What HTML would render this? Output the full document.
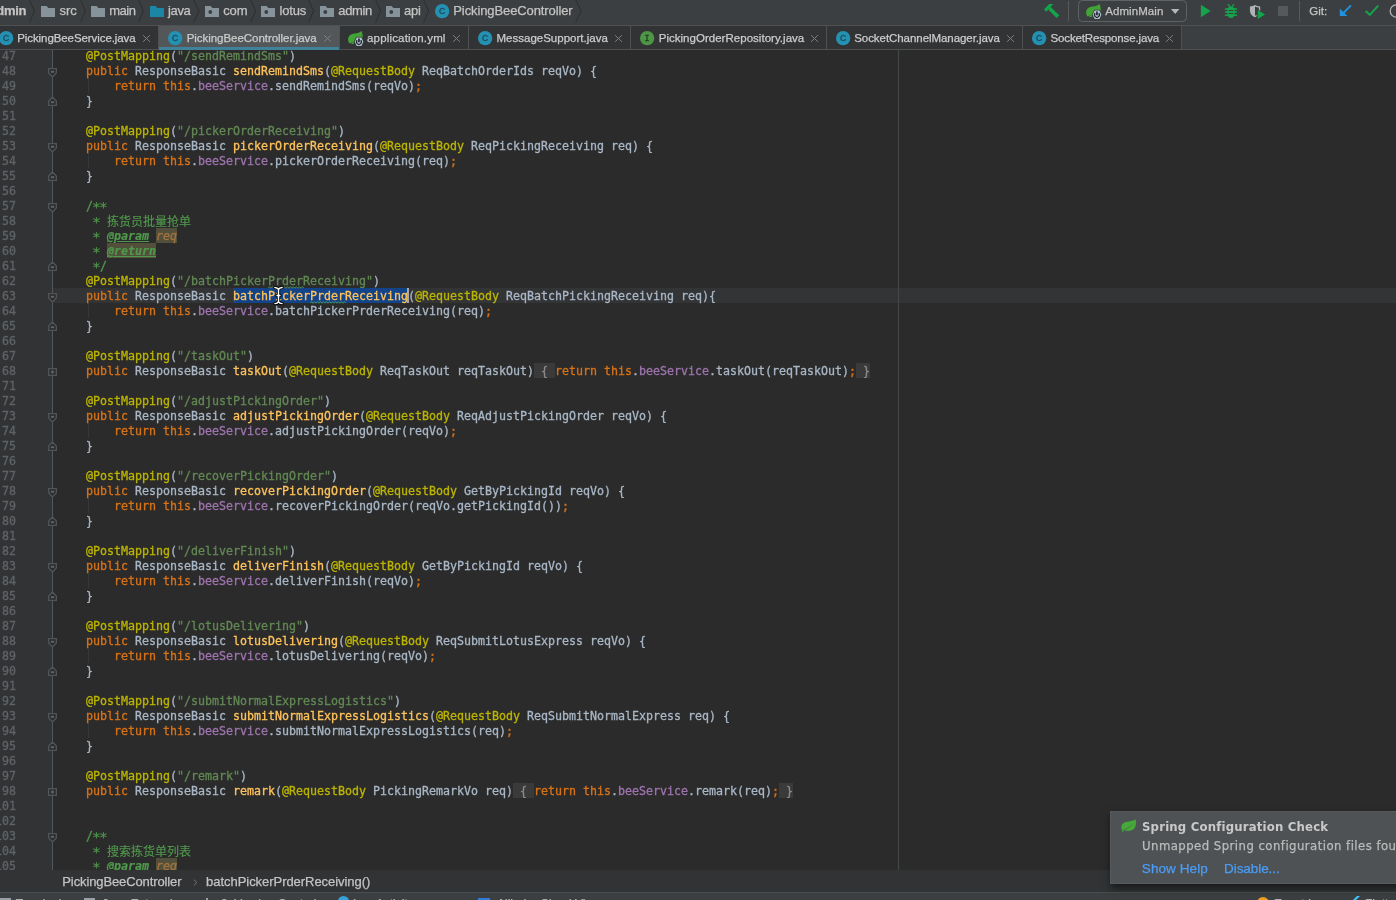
<!DOCTYPE html>
<html lang="zh">
<head>
<meta charset="utf-8">
<title>PickingBeeController.java</title>
<style>
*{box-sizing:border-box;margin:0;padding:0}
html,body{width:1396px;height:900px;overflow:hidden;background:#2b2b2b}
body{position:relative;will-change:transform;font-family:"Liberation Sans","Noto Sans CJK SC",sans-serif;color:#bbbbbb;font-size:13px}
.abs{position:absolute}
/* ---------- shared ---------- */
.tx{position:absolute;white-space:nowrap;-webkit-text-stroke:0.25px}
.ic{position:absolute;overflow:visible}
/* ---------- nav bar ---------- */
#nav{position:absolute;left:0;top:0;width:1396px;height:25px;background:#3c3f41;overflow:hidden}
#navline{position:absolute;left:0;top:25px;width:1396px;height:1px;background:#4e5052}
.vs{position:absolute;top:1px;width:1px;height:20px;background:#57595b}
.rc{position:absolute;left:1078px;top:0px;width:109px;height:22px;border:1px solid #5f6264;border-radius:4.5px}
/* ---------- tabs ---------- */
#tabs{position:absolute;left:0;top:26px;width:1396px;height:24px;background:#3c3f41;overflow:hidden}
#tabline{position:absolute;left:0;top:23px;width:1396px;height:1px;background:#4e5052}
.tab{position:absolute;top:0;height:23px;background:#313335;box-shadow:1px 0 0 #4e5052}
.tab.act{background:#53575a;height:24px;border-bottom:3px solid #3f8299}
/* ---------- editor ---------- */
#ed{will-change:transform;position:absolute;left:0;top:50px;width:1396px;height:820px;background:#2b2b2b;overflow:hidden}
#edin{position:absolute;left:0;top:-50px;width:1396px;height:900px}
#gut{position:absolute;left:0;top:0;width:52px;height:900px;background:#313335}
#gutline{position:absolute;left:52px;top:0;width:1px;height:900px;background:#54585a}
#margin{position:absolute;left:898px;top:0;width:1px;height:900px;background:#454848}
.no{position:absolute;left:-14px;width:30px;height:15px;line-height:17px;font-family:"DejaVu Sans Mono","Liberation Mono",monospace;font-size:11.63px;color:#606366;white-space:pre;text-align:right;-webkit-text-stroke:0.3px}
.fm{position:absolute}
.ln{position:absolute;left:58px;height:15px;line-height:17px;font-family:"DejaVu Sans Mono","Liberation Mono","Noto Sans CJK SC",monospace;font-size:11.63px;color:#a9b7c6;white-space:pre;-webkit-text-stroke:0.3px}
.ln.cur::before{content:"";position:absolute;left:-5px;top:0;width:1343px;height:15px;background:#333436;z-index:-1}
.ig{position:absolute;width:1px;background:#35383b}
.k{color:#d97317}.a{color:#bcb500}.s{color:#628854}.m{color:#ffc35b}.f{color:#9e74ae}
.d,.c{color:#50994c}
.c{font-size:12px;letter-spacing:0;-webkit-text-stroke:0.15px;position:relative;top:1.2px}
.ln .t,.ln .T{color:#50994c;font-weight:bold;font-style:italic;text-decoration:underline;-webkit-text-stroke:0.2px}
.bgx,.ln .T,.p,.S,.F{display:inline-block;height:15px;line-height:17px;vertical-align:top}
.ln .T{background:#52503a}
.x{display:inline-block;width:7px;height:15px;vertical-align:top;text-align:center;font-size:14.6px;line-height:15px;text-indent:-0.9px;position:relative;top:1.4px;-webkit-text-stroke:0.1px}
.p{color:#a27440;font-style:italic;background:#52503a}
.S{background:#134388}
.F{background:#3a3a3a;color:#8c8c8c}
.C{display:inline-block;width:0;height:15px;vertical-align:top;position:relative}
.C::after{content:"";position:absolute;left:-1px;top:0;width:2px;height:15px;background:#a8a8a8}
/* ---------- breadcrumbs ---------- */
#bc{position:absolute;left:0;top:870px;width:1396px;height:22px;background:#313335}
#bcline{position:absolute;left:0;top:892px;width:1396px;height:1px;background:#4b4d4f}
/* ---------- bottom tool strip ---------- */
#bot{position:absolute;left:0;top:893px;width:1396px;height:7px;background:#3c3f41;overflow:hidden}
/* ---------- notification ---------- */
#note{position:absolute;left:1110px;top:811px;width:300px;height:73px;background:#4e5254;border:1px solid #565a5c;box-shadow:1px 4px 8px rgba(0,0,0,.55)}
#notec{position:absolute;left:0;top:0;width:1396px;height:900px;overflow:hidden;pointer-events:none}
</style>
</head>
<body>
<div id="ed"><div id="edin" style="z-index:0">
<div id="gut"></div>
<div id="gutline"></div>
<div id="margin"></div>
<div class="ig" style="left:88px;top:78px;height:15px"></div>
<div class="ig" style="left:88px;top:153px;height:15px"></div>
<div class="ig" style="left:88px;top:303px;height:15px"></div>
<div class="ig" style="left:88px;top:423px;height:15px"></div>
<div class="ig" style="left:88px;top:498px;height:15px"></div>
<div class="ig" style="left:88px;top:573px;height:15px"></div>
<div class="ig" style="left:88px;top:648px;height:15px"></div>
<div class="ig" style="left:88px;top:723px;height:15px"></div>
<div class="ln" style="top:48px">    <span class="a">@PostMapping</span>(<span class="s">"/sendRemindSms"</span>)</div>
<div class="ln" style="top:63px">    <span class="k">public</span> ResponseBasic <span class="m">sendRemindSms</span>(<span class="a">@RequestBody</span> ReqBatchOrderIds reqVo) {</div>
<div class="ln" style="top:78px">        <span class="k">return this</span>.<span class="f">beeService</span>.sendRemindSms(reqVo)<span class="k">;</span></div>
<div class="ln" style="top:93px">    }</div>
<div class="ln" style="top:108px"></div>
<div class="ln" style="top:123px">    <span class="a">@PostMapping</span>(<span class="s">"/pickerOrderReceiving"</span>)</div>
<div class="ln" style="top:138px">    <span class="k">public</span> ResponseBasic <span class="m">pickerOrderReceiving</span>(<span class="a">@RequestBody</span> ReqPickingReceiving req) {</div>
<div class="ln" style="top:153px">        <span class="k">return this</span>.<span class="f">beeService</span>.pickerOrderReceiving(req)<span class="k">;</span></div>
<div class="ln" style="top:168px">    }</div>
<div class="ln" style="top:183px"></div>
<div class="ln" style="top:198px">    <span class="d">/<span class="x">*</span><span class="x">*</span></span></div>
<div class="ln" style="top:213px">    <span class="d"> <span class="x">*</span> </span><span class="c">拣货员批量抢单</span></div>
<div class="ln" style="top:228px">    <span class="d"> <span class="x">*</span> </span><span class="t">@param</span><span class="d"> </span><span class="p">req</span></div>
<div class="ln" style="top:243px">    <span class="d"> <span class="x">*</span> </span><span class="T">@return</span></div>
<div class="ln" style="top:258px">    <span class="d"> <span class="x">*</span>/</span></div>
<div class="ln" style="top:273px">    <span class="a">@PostMapping</span>(<span class="s">"/batchPickerPrderReceiving"</span>)</div>
<div class="ln cur" style="top:288px">    <span class="k">public</span> ResponseBasic <span class="S"><span class="m">batchPickerPrderReceiving</span></span><span class="C"></span>(<span class="a">@RequestBody</span> ReqBatchPickingReceiving req){</div>
<div class="ln" style="top:303px">        <span class="k">return this</span>.<span class="f">beeService</span>.batchPickerPrderReceiving(req)<span class="k">;</span></div>
<div class="ln" style="top:318px">    }</div>
<div class="ln" style="top:333px"></div>
<div class="ln" style="top:348px">    <span class="a">@PostMapping</span>(<span class="s">"/taskOut"</span>)</div>
<div class="ln" style="top:363px">    <span class="k">public</span> ResponseBasic <span class="m">taskOut</span>(<span class="a">@RequestBody</span> ReqTaskOut reqTaskOut)<span class="F"> { </span><span class="k">return this</span>.<span class="f">beeService</span>.taskOut(reqTaskOut)<span class="k">;</span><span class="F"> }</span></div>
<div class="ln" style="top:378px"></div>
<div class="ln" style="top:393px">    <span class="a">@PostMapping</span>(<span class="s">"/adjustPickingOrder"</span>)</div>
<div class="ln" style="top:408px">    <span class="k">public</span> ResponseBasic <span class="m">adjustPickingOrder</span>(<span class="a">@RequestBody</span> ReqAdjustPickingOrder reqVo) {</div>
<div class="ln" style="top:423px">        <span class="k">return this</span>.<span class="f">beeService</span>.adjustPickingOrder(reqVo)<span class="k">;</span></div>
<div class="ln" style="top:438px">    }</div>
<div class="ln" style="top:453px"></div>
<div class="ln" style="top:468px">    <span class="a">@PostMapping</span>(<span class="s">"/recoverPickingOrder"</span>)</div>
<div class="ln" style="top:483px">    <span class="k">public</span> ResponseBasic <span class="m">recoverPickingOrder</span>(<span class="a">@RequestBody</span> GetByPickingId reqVo) {</div>
<div class="ln" style="top:498px">        <span class="k">return this</span>.<span class="f">beeService</span>.recoverPickingOrder(reqVo.getPickingId())<span class="k">;</span></div>
<div class="ln" style="top:513px">    }</div>
<div class="ln" style="top:528px"></div>
<div class="ln" style="top:543px">    <span class="a">@PostMapping</span>(<span class="s">"/deliverFinish"</span>)</div>
<div class="ln" style="top:558px">    <span class="k">public</span> ResponseBasic <span class="m">deliverFinish</span>(<span class="a">@RequestBody</span> GetByPickingId reqVo) {</div>
<div class="ln" style="top:573px">        <span class="k">return this</span>.<span class="f">beeService</span>.deliverFinish(reqVo)<span class="k">;</span></div>
<div class="ln" style="top:588px">    }</div>
<div class="ln" style="top:603px"></div>
<div class="ln" style="top:618px">    <span class="a">@PostMapping</span>(<span class="s">"/lotusDelivering"</span>)</div>
<div class="ln" style="top:633px">    <span class="k">public</span> ResponseBasic <span class="m">lotusDelivering</span>(<span class="a">@RequestBody</span> ReqSubmitLotusExpress reqVo) {</div>
<div class="ln" style="top:648px">        <span class="k">return this</span>.<span class="f">beeService</span>.lotusDelivering(reqVo)<span class="k">;</span></div>
<div class="ln" style="top:663px">    }</div>
<div class="ln" style="top:678px"></div>
<div class="ln" style="top:693px">    <span class="a">@PostMapping</span>(<span class="s">"/submitNormalExpressLogistics"</span>)</div>
<div class="ln" style="top:708px">    <span class="k">public</span> ResponseBasic <span class="m">submitNormalExpressLogistics</span>(<span class="a">@RequestBody</span> ReqSubmitNormalExpress req) {</div>
<div class="ln" style="top:723px">        <span class="k">return this</span>.<span class="f">beeService</span>.submitNormalExpressLogistics(req)<span class="k">;</span></div>
<div class="ln" style="top:738px">    }</div>
<div class="ln" style="top:753px"></div>
<div class="ln" style="top:768px">    <span class="a">@PostMapping</span>(<span class="s">"/remark"</span>)</div>
<div class="ln" style="top:783px">    <span class="k">public</span> ResponseBasic <span class="m">remark</span>(<span class="a">@RequestBody</span> PickingRemarkVo req)<span class="F"> { </span><span class="k">return this</span>.<span class="f">beeService</span>.remark(req)<span class="k">;</span><span class="F"> }</span></div>
<div class="ln" style="top:798px"></div>
<div class="ln" style="top:813px"></div>
<div class="ln" style="top:828px">    <span class="d">/<span class="x">*</span><span class="x">*</span></span></div>
<div class="ln" style="top:843px">    <span class="d"> <span class="x">*</span> </span><span class="c">搜索拣货单列表</span></div>
<div class="ln" style="top:858px">    <span class="d"> <span class="x">*</span> </span><span class="t">@param</span><span class="d"> </span><span class="p">req</span></div>
<div class="no" style="top:48px">47</div>
<div class="no" style="top:63px">48</div>
<svg class="fm" style="left:48px;top:68px" width="9" height="10" viewBox="0 0 9 10"><path d="M0.6 0.6H8.4V4.9L4.5 8.9L0.6 4.9Z" fill="#2a2b2c" stroke="#505456" stroke-width="1.5"/><rect x="2.8" y="2.8" width="3.4" height="2" fill="#5f6365"/></svg>
<div class="no" style="top:78px">49</div>
<div class="no" style="top:93px">50</div>
<svg class="fm" style="left:48px;top:96px" width="9" height="10" viewBox="0 0 9 10"><path d="M0.6 9.4H8.4V5.1L4.5 1.1L0.6 5.1Z" fill="#2a2b2c" stroke="#505456" stroke-width="1.5"/><rect x="2.8" y="5.2" width="3.4" height="2" fill="#5f6365"/></svg>
<div class="no" style="top:108px">51</div>
<div class="no" style="top:123px">52</div>
<div class="no" style="top:138px">53</div>
<svg class="fm" style="left:48px;top:143px" width="9" height="10" viewBox="0 0 9 10"><path d="M0.6 0.6H8.4V4.9L4.5 8.9L0.6 4.9Z" fill="#2a2b2c" stroke="#505456" stroke-width="1.5"/><rect x="2.8" y="2.8" width="3.4" height="2" fill="#5f6365"/></svg>
<div class="no" style="top:153px">54</div>
<div class="no" style="top:168px">55</div>
<svg class="fm" style="left:48px;top:171px" width="9" height="10" viewBox="0 0 9 10"><path d="M0.6 9.4H8.4V5.1L4.5 1.1L0.6 5.1Z" fill="#2a2b2c" stroke="#505456" stroke-width="1.5"/><rect x="2.8" y="5.2" width="3.4" height="2" fill="#5f6365"/></svg>
<div class="no" style="top:183px">56</div>
<div class="no" style="top:198px">57</div>
<svg class="fm" style="left:48px;top:203px" width="9" height="10" viewBox="0 0 9 10"><path d="M0.6 0.6H8.4V4.9L4.5 8.9L0.6 4.9Z" fill="#2a2b2c" stroke="#505456" stroke-width="1.5"/><rect x="2.8" y="2.8" width="3.4" height="2" fill="#5f6365"/></svg>
<div class="no" style="top:213px">58</div>
<div class="no" style="top:228px">59</div>
<div class="no" style="top:243px">60</div>
<div class="no" style="top:258px">61</div>
<svg class="fm" style="left:48px;top:261px" width="9" height="10" viewBox="0 0 9 10"><path d="M0.6 9.4H8.4V5.1L4.5 1.1L0.6 5.1Z" fill="#2a2b2c" stroke="#505456" stroke-width="1.5"/><rect x="2.8" y="5.2" width="3.4" height="2" fill="#5f6365"/></svg>
<div class="no" style="top:273px">62</div>
<div class="no" style="top:288px">63</div>
<svg class="fm" style="left:48px;top:293px" width="9" height="10" viewBox="0 0 9 10"><path d="M0.6 0.6H8.4V4.9L4.5 8.9L0.6 4.9Z" fill="#2a2b2c" stroke="#505456" stroke-width="1.5"/><rect x="2.8" y="2.8" width="3.4" height="2" fill="#5f6365"/></svg>
<div class="no" style="top:303px">64</div>
<div class="no" style="top:318px">65</div>
<svg class="fm" style="left:48px;top:321px" width="9" height="10" viewBox="0 0 9 10"><path d="M0.6 9.4H8.4V5.1L4.5 1.1L0.6 5.1Z" fill="#2a2b2c" stroke="#505456" stroke-width="1.5"/><rect x="2.8" y="5.2" width="3.4" height="2" fill="#5f6365"/></svg>
<div class="no" style="top:333px">66</div>
<div class="no" style="top:348px">67</div>
<div class="no" style="top:363px">68</div>
<svg class="fm" style="left:48px;top:368px" width="9" height="8" viewBox="0 0 9 8"><rect x="0.7" y="0.7" width="7.6" height="6.6" fill="#27292a" stroke="#505456" stroke-width="1.4"/><path d="M2.7 4H6.3M4.5 2.2V5.8" stroke="#5f6365" stroke-width="1.5"/></svg>
<div class="no" style="top:378px">71</div>
<div class="no" style="top:393px">72</div>
<div class="no" style="top:408px">73</div>
<svg class="fm" style="left:48px;top:413px" width="9" height="10" viewBox="0 0 9 10"><path d="M0.6 0.6H8.4V4.9L4.5 8.9L0.6 4.9Z" fill="#2a2b2c" stroke="#505456" stroke-width="1.5"/><rect x="2.8" y="2.8" width="3.4" height="2" fill="#5f6365"/></svg>
<div class="no" style="top:423px">74</div>
<div class="no" style="top:438px">75</div>
<svg class="fm" style="left:48px;top:441px" width="9" height="10" viewBox="0 0 9 10"><path d="M0.6 9.4H8.4V5.1L4.5 1.1L0.6 5.1Z" fill="#2a2b2c" stroke="#505456" stroke-width="1.5"/><rect x="2.8" y="5.2" width="3.4" height="2" fill="#5f6365"/></svg>
<div class="no" style="top:453px">76</div>
<div class="no" style="top:468px">77</div>
<div class="no" style="top:483px">78</div>
<svg class="fm" style="left:48px;top:488px" width="9" height="10" viewBox="0 0 9 10"><path d="M0.6 0.6H8.4V4.9L4.5 8.9L0.6 4.9Z" fill="#2a2b2c" stroke="#505456" stroke-width="1.5"/><rect x="2.8" y="2.8" width="3.4" height="2" fill="#5f6365"/></svg>
<div class="no" style="top:498px">79</div>
<div class="no" style="top:513px">80</div>
<svg class="fm" style="left:48px;top:516px" width="9" height="10" viewBox="0 0 9 10"><path d="M0.6 9.4H8.4V5.1L4.5 1.1L0.6 5.1Z" fill="#2a2b2c" stroke="#505456" stroke-width="1.5"/><rect x="2.8" y="5.2" width="3.4" height="2" fill="#5f6365"/></svg>
<div class="no" style="top:528px">81</div>
<div class="no" style="top:543px">82</div>
<div class="no" style="top:558px">83</div>
<svg class="fm" style="left:48px;top:563px" width="9" height="10" viewBox="0 0 9 10"><path d="M0.6 0.6H8.4V4.9L4.5 8.9L0.6 4.9Z" fill="#2a2b2c" stroke="#505456" stroke-width="1.5"/><rect x="2.8" y="2.8" width="3.4" height="2" fill="#5f6365"/></svg>
<div class="no" style="top:573px">84</div>
<div class="no" style="top:588px">85</div>
<svg class="fm" style="left:48px;top:591px" width="9" height="10" viewBox="0 0 9 10"><path d="M0.6 9.4H8.4V5.1L4.5 1.1L0.6 5.1Z" fill="#2a2b2c" stroke="#505456" stroke-width="1.5"/><rect x="2.8" y="5.2" width="3.4" height="2" fill="#5f6365"/></svg>
<div class="no" style="top:603px">86</div>
<div class="no" style="top:618px">87</div>
<div class="no" style="top:633px">88</div>
<svg class="fm" style="left:48px;top:638px" width="9" height="10" viewBox="0 0 9 10"><path d="M0.6 0.6H8.4V4.9L4.5 8.9L0.6 4.9Z" fill="#2a2b2c" stroke="#505456" stroke-width="1.5"/><rect x="2.8" y="2.8" width="3.4" height="2" fill="#5f6365"/></svg>
<div class="no" style="top:648px">89</div>
<div class="no" style="top:663px">90</div>
<svg class="fm" style="left:48px;top:666px" width="9" height="10" viewBox="0 0 9 10"><path d="M0.6 9.4H8.4V5.1L4.5 1.1L0.6 5.1Z" fill="#2a2b2c" stroke="#505456" stroke-width="1.5"/><rect x="2.8" y="5.2" width="3.4" height="2" fill="#5f6365"/></svg>
<div class="no" style="top:678px">91</div>
<div class="no" style="top:693px">92</div>
<div class="no" style="top:708px">93</div>
<svg class="fm" style="left:48px;top:713px" width="9" height="10" viewBox="0 0 9 10"><path d="M0.6 0.6H8.4V4.9L4.5 8.9L0.6 4.9Z" fill="#2a2b2c" stroke="#505456" stroke-width="1.5"/><rect x="2.8" y="2.8" width="3.4" height="2" fill="#5f6365"/></svg>
<div class="no" style="top:723px">94</div>
<div class="no" style="top:738px">95</div>
<svg class="fm" style="left:48px;top:741px" width="9" height="10" viewBox="0 0 9 10"><path d="M0.6 9.4H8.4V5.1L4.5 1.1L0.6 5.1Z" fill="#2a2b2c" stroke="#505456" stroke-width="1.5"/><rect x="2.8" y="5.2" width="3.4" height="2" fill="#5f6365"/></svg>
<div class="no" style="top:753px">96</div>
<div class="no" style="top:768px">97</div>
<div class="no" style="top:783px">98</div>
<svg class="fm" style="left:48px;top:788px" width="9" height="8" viewBox="0 0 9 8"><rect x="0.7" y="0.7" width="7.6" height="6.6" fill="#27292a" stroke="#505456" stroke-width="1.4"/><path d="M2.7 4H6.3M4.5 2.2V5.8" stroke="#5f6365" stroke-width="1.5"/></svg>
<div class="no" style="top:798px">101</div>
<div class="no" style="top:813px">102</div>
<div class="no" style="top:828px">103</div>
<svg class="fm" style="left:48px;top:833px" width="9" height="10" viewBox="0 0 9 10"><path d="M0.6 0.6H8.4V4.9L4.5 8.9L0.6 4.9Z" fill="#2a2b2c" stroke="#505456" stroke-width="1.5"/><rect x="2.8" y="2.8" width="3.4" height="2" fill="#5f6365"/></svg>
<div class="no" style="top:843px">104</div>
<div class="no" style="top:858px">105</div>
<svg class="fm" style="left:268px;top:286px" width="36" height="3" viewBox="0 0 36 3"><path d="M0 2.3L1.5 0.6L3 2.3L4.5 0.6L6 2.3L7.5 0.6L9 2.3L10.5 0.6L12 2.3L13.5 0.6L15 2.3L16.5 0.6L18 2.3L19.5 0.6L21 2.3L22.5 0.6L24 2.3L25.5 0.6L27 2.3L28.5 0.6L30 2.3L31.5 0.6L33 2.3L34.5 0.6L36 2.3" fill="none" stroke="#4fa564" stroke-width="0.9" opacity=".9"/></svg>
<svg class="fm" style="left:310px;top:301px" width="36" height="3" viewBox="0 0 36 3"><path d="M0 2.3L1.5 0.6L3 2.3L4.5 0.6L6 2.3L7.5 0.6L9 2.3L10.5 0.6L12 2.3L13.5 0.6L15 2.3L16.5 0.6L18 2.3L19.5 0.6L21 2.3L22.5 0.6L24 2.3L25.5 0.6L27 2.3L28.5 0.6L30 2.3L31.5 0.6L33 2.3L34.5 0.6L36 2.3" fill="none" stroke="#4fa564" stroke-width="0.9" opacity=".9"/></svg>
<svg class="fm" style="left:274px;top:286px;overflow:visible" width="9" height="19" viewBox="0 0 9 19"><path d="M0.9 1.4C2.7 1.4 3.9 2.1 4.5 3.5C5.1 2.1 6.3 1.4 8.1 1.4M0.9 17.6C2.7 17.6 3.9 16.9 4.5 15.5C5.1 16.9 6.3 17.6 8.1 17.6M4.5 3.3V15.7M3.1 9.4H5.9" fill="none" stroke="#050505" stroke-width="3.3" stroke-linecap="round" stroke-linejoin="round"/><path d="M0.9 1.4C2.7 1.4 3.9 2.1 4.5 3.5C5.1 2.1 6.3 1.4 8.1 1.4M0.9 17.6C2.7 17.6 3.9 16.9 4.5 15.5C5.1 16.9 6.3 17.6 8.1 17.6M4.5 3.3V15.7M3.1 9.4H5.9" fill="none" stroke="#ffffff" stroke-width="1.45" stroke-linecap="round" stroke-linejoin="round"/></svg>
</div></div>

<div id="nav">
<span class="tx" style="left:-3.70px;top:1.09px;height:20px;line-height:20px;font-size:13px;letter-spacing:-0.288px;color:#c4c4c4;font-family:'Liberation Sans',sans-serif;font-weight:bold;">dmin</span>
<svg class="ic" style="left:29.2px;top:0" width="6.4" height="23" viewBox="0 0 6.4 23"><path d="M0.5 -0.5L5.4 11L0.5 22.5" fill="none" stroke="#2b2d2e" stroke-width="1"/></svg>
<svg class="ic" style="left:41px;top:5.5px" width="14" height="11" viewBox="0 0 14 11"><path d="M0 0H5.6L7.4 2H14V11H0Z" fill="#87939a"/></svg>
<span class="tx" style="left:59.50px;top:1.09px;height:20px;line-height:20px;font-size:13px;letter-spacing:-0.010px;color:#c4c4c4;font-family:'Liberation Sans',sans-serif;">src</span>
<svg class="ic" style="left:80px;top:0" width="6.4" height="23" viewBox="0 0 6.4 23"><path d="M0.5 -0.5L5.4 11L0.5 22.5" fill="none" stroke="#2b2d2e" stroke-width="1"/></svg>
<svg class="ic" style="left:91px;top:5.5px" width="14" height="11" viewBox="0 0 14 11"><path d="M0 0H5.6L7.4 2H14V11H0Z" fill="#87939a"/></svg>
<span class="tx" style="left:109.20px;top:1.09px;height:20px;line-height:20px;font-size:13px;letter-spacing:-0.444px;color:#c4c4c4;font-family:'Liberation Sans',sans-serif;">main</span>
<svg class="ic" style="left:138.1px;top:0" width="6.4" height="23" viewBox="0 0 6.4 23"><path d="M0.5 -0.5L5.4 11L0.5 22.5" fill="none" stroke="#2b2d2e" stroke-width="1"/></svg>
<svg class="ic" style="left:150px;top:6px" width="14" height="11" viewBox="0 0 14 11"><path d="M0 0H5.6L7.4 2H14V11H0Z" fill="#1c86a6"/></svg>
<span class="tx" style="left:168.00px;top:1.09px;height:20px;line-height:20px;font-size:13px;letter-spacing:-0.362px;color:#c4c4c4;font-family:'Liberation Sans',sans-serif;">java</span>
<svg class="ic" style="left:193.2px;top:0" width="7" height="23" viewBox="0 0 7 23"><path d="M0.5 -0.5L6 11L0.5 22.5" fill="none" stroke="#2b2d2e" stroke-width="1"/></svg>
<svg class="ic" style="left:205px;top:5.5px" width="14" height="11" viewBox="0 0 14 11"><path d="M0 0H5.6L7.4 2H14V11H0Z" fill="#87939a"/><circle cx="5.3" cy="6" r="1.9" fill="#3c3f41"/></svg>
<span class="tx" style="left:223.20px;top:1.09px;height:20px;line-height:20px;font-size:13px;letter-spacing:-0.086px;color:#c4c4c4;font-family:'Liberation Sans',sans-serif;">com</span>
<svg class="ic" style="left:249.6px;top:0" width="6.6" height="23" viewBox="0 0 6.6 23"><path d="M0.5 -0.5L5.6 11L0.5 22.5" fill="none" stroke="#2b2d2e" stroke-width="1"/></svg>
<svg class="ic" style="left:261px;top:5.5px" width="14" height="11" viewBox="0 0 14 11"><path d="M0 0H5.6L7.4 2H14V11H0Z" fill="#87939a"/><circle cx="5.3" cy="6" r="1.9" fill="#3c3f41"/></svg>
<span class="tx" style="left:279.50px;top:1.09px;height:20px;line-height:20px;font-size:13px;letter-spacing:-0.192px;color:#c4c4c4;font-family:'Liberation Sans',sans-serif;">lotus</span>
<svg class="ic" style="left:307.9px;top:0" width="6.6" height="23" viewBox="0 0 6.6 23"><path d="M0.5 -0.5L5.6 11L0.5 22.5" fill="none" stroke="#2b2d2e" stroke-width="1"/></svg>
<svg class="ic" style="left:319.7px;top:5.5px" width="14" height="11" viewBox="0 0 14 11"><path d="M0 0H5.6L7.4 2H14V11H0Z" fill="#87939a"/><circle cx="5.3" cy="6" r="1.9" fill="#3c3f41"/></svg>
<span class="tx" style="left:338.30px;top:1.09px;height:20px;line-height:20px;font-size:13px;letter-spacing:-0.362px;color:#c4c4c4;font-family:'Liberation Sans',sans-serif;">admin</span>
<svg class="ic" style="left:374.5px;top:0" width="6.6" height="23" viewBox="0 0 6.6 23"><path d="M0.5 -0.5L5.6 11L0.5 22.5" fill="none" stroke="#2b2d2e" stroke-width="1"/></svg>
<svg class="ic" style="left:386px;top:5.5px" width="14" height="11" viewBox="0 0 14 11"><path d="M0 0H5.6L7.4 2H14V11H0Z" fill="#87939a"/><circle cx="5.3" cy="6" r="1.9" fill="#3c3f41"/></svg>
<span class="tx" style="left:403.90px;top:1.09px;height:20px;line-height:20px;font-size:13px;letter-spacing:-0.116px;color:#c4c4c4;font-family:'Liberation Sans',sans-serif;">api</span>
<svg class="ic" style="left:423.3px;top:0" width="6.6" height="23" viewBox="0 0 6.6 23"><path d="M0.5 -0.5L5.6 11L0.5 22.5" fill="none" stroke="#2b2d2e" stroke-width="1"/></svg>
<svg class="ic" style="left:434.75px;top:4.05px" width="14.3" height="14.3" viewBox="0 0 14.2 14.2"><circle cx="7.1" cy="7.1" r="7.1" fill="#2591b2"/><text x="7.1" y="10.15" text-anchor="middle" font-family="'Liberation Sans',sans-serif" font-size="8.6" fill="#1d4f60" stroke="#1d4f60" stroke-width="0.35">C</text></svg>
<span class="tx" style="left:453.30px;top:1.09px;height:20px;line-height:20px;font-size:13px;letter-spacing:-0.105px;color:#c4c4c4;font-family:'Liberation Sans',sans-serif;">PickingBeeController</span>
<svg class="ic" style="left:575px;top:0" width="7.2" height="23" viewBox="0 0 7.2 23"><path d="M0.5 -0.5L6.2 11L0.5 22.5" fill="none" stroke="#2b2d2e" stroke-width="1"/></svg>
<div class="vs" style="left:1068px"></div>
<div class="vs" style="left:1299px"></div>
<div class="rc"></div>
<svg class="ic" style="left:1085.8px;top:4px" width="17" height="17" viewBox="0 0 17 17"><path d="M13.3 -0.1C14.5 1.8 15.1 4.6 14.4 7.6C13.6 10.6 9.6 11.6 6 11.2C4.4 11.2 3 11.7 2 12.4L1.2 11.9C-0.6 9.6 -0.2 5.6 2.6 3.7C5.6 1.8 10 3.1 13.3 -0.1Z" fill="#43a436"/><path d="M3.6 11.6L6.4 11.2L5.6 13.1L3.4 12.9Z" fill="#43a436"/><path d="M8.3 5.7H13.8L16.3 10.75L13.8 15.8H8.3L5.7 10.75Z" fill="#3c3f41"/><path d="M8.75 6.5H13.35L15.4 10.75L13.35 15H8.75L6.6 10.75Z" fill="#b3c4d5"/><path d="M9.2 9.3A2.4 2.4 0 1 0 12.7 9.3" fill="none" stroke="#20252a" stroke-width="1.25"/><path d="M10.95 7.6V11.3" fill="none" stroke="#20252a" stroke-width="1.7"/></svg>
<span class="tx" style="left:1105.20px;top:0.81px;height:20px;line-height:20px;font-size:11.5px;letter-spacing:0.075px;color:#c4c4c4;font-family:'Liberation Sans',sans-serif;">AdminMain</span>
<span class="tx" style="left:1309.20px;top:0.81px;height:20px;line-height:20px;font-size:11.5px;letter-spacing:0.052px;color:#c4c4c4;font-family:'Liberation Sans',sans-serif;">Git:</span>
<svg class="ic" style="left:0;top:0" width="1396" height="25" viewBox="0 0 1396 25"><path d="M1043.9 9.5L1049.2 4H1053.3L1046.2 11.7Z" fill="#14a44b"/><path d="M1048 9.3L1050.5 6.8L1059.3 15.4L1056.6 18.1Z" fill="#14a44b"/><path d="M1171 8.9H1179.4L1175.2 14.1Z" fill="#b4b6b8"/><path d="M1200.9 4.8L1210.6 11L1200.9 17.2Z" fill="#14a44b"/><path d="M1228 4.2L1230.3 7.2M1234 4.2L1231.7 7.2" stroke="#14a44b" stroke-width="1.3" fill="none"/><path d="M1227.3 9.6C1227.3 5.8 1234.7 5.8 1234.7 9.6V13.4C1234.7 19.4 1227.3 19.4 1227.3 13.4Z" fill="#14a44b"/><path d="M1224.9 8.9H1237.1M1224.9 12H1237.1M1224.9 15.3H1237.1" stroke="#14a44b" stroke-width="1.5" fill="none"/><path d="M1228.6 10.45H1233.4M1228.6 13.55H1233.4" stroke="#3c3f41" stroke-width="1.1" fill="none"/><path d="M1249.9 6.4C1251.9 6.3 1253.6 5.8 1255 5C1256.4 5.8 1258.1 6.3 1260.2 6.4V10.4C1260.2 13.8 1258 16 1255 17.2C1252 16 1249.9 13.8 1249.9 10.4Z" fill="#b0b3b6"/><path d="M1255 6.5C1256 7 1257.3 7.4 1258.9 7.5V10.4C1258.9 12.9 1257.4 14.7 1255 15.8Z" fill="#3c3f41"/><path d="M1256.6 8.6L1266.6 14.5L1256.6 20.5Z" fill="#3c3f41"/><path d="M1257.8 10.1L1265 14.5L1257.8 19Z" fill="#14a44b"/><rect x="1278" y="6" width="10" height="10" fill="#56595b"/><path d="M1351 5.4L1342 14.4" stroke="#1f93de" stroke-width="1.9" fill="none"/><path d="M1339.8 8.4V16H1347.4Z" fill="#1f93de"/><path d="M1365.6 11L1369.8 14.8L1378.2 5.6" stroke="#14a44b" stroke-width="2" fill="none"/><circle cx="1396.4" cy="11" r="6.2" fill="none" stroke="#afb1b3" stroke-width="1.3"/></svg>
</div>
<div id="navline"></div>

<div id="tabs">
<div id="tabline"></div>
<div class="tab" style="left:0px;width:158px"></div>
<svg class="ic" style="left:-1.15px;top:4.85px" width="14.3" height="14.3" viewBox="0 0 14.2 14.2"><circle cx="7.1" cy="7.1" r="7.1" fill="#2591b2"/><text x="7.1" y="10.15" text-anchor="middle" font-family="'Liberation Sans',sans-serif" font-size="8.6" fill="#1d4f60" stroke="#1d4f60" stroke-width="0.35">C</text></svg>
<span class="tx" style="left:17.20px;top:2.11px;height:20px;line-height:20px;font-size:11.5px;letter-spacing:-0.081px;color:#cccccc;font-family:'Liberation Sans',sans-serif;">PickingBeeService.java</span>
<svg class="ic" style="left:142.1px;top:8.1px" width="9" height="9" viewBox="0 0 9 9"><path d="M1.1 1.2L7.9 7.8M7.9 1.2L1.1 7.8" stroke="#7d8183" stroke-width="1" fill="none"/></svg>
<div class="tab act" style="left:159px;width:180px"></div>
<svg class="ic" style="left:167.85px;top:4.85px" width="14.3" height="14.3" viewBox="0 0 14.2 14.2"><circle cx="7.1" cy="7.1" r="7.1" fill="#2591b2"/><text x="7.1" y="10.15" text-anchor="middle" font-family="'Liberation Sans',sans-serif" font-size="8.6" fill="#1d4f60" stroke="#1d4f60" stroke-width="0.35">C</text></svg>
<span class="tx" style="left:186.70px;top:2.11px;height:20px;line-height:20px;font-size:11.5px;letter-spacing:-0.042px;color:#cccccc;font-family:'Liberation Sans',sans-serif;">PickingBeeController.java</span>
<svg class="ic" style="left:323px;top:8.1px" width="9" height="9" viewBox="0 0 9 9"><path d="M1.1 1.2L7.9 7.8M7.9 1.2L1.1 7.8" stroke="#7d8183" stroke-width="1" fill="none"/></svg>
<div class="tab" style="left:340px;width:128px"></div>
<svg class="ic" style="left:347.7px;top:5px" width="17" height="17" viewBox="0 0 17 17"><path d="M13.3 -0.1C14.5 1.8 15.1 4.6 14.4 7.6C13.6 10.6 9.6 11.6 6 11.2C4.4 11.2 3 11.7 2 12.4L1.2 11.9C-0.6 9.6 -0.2 5.6 2.6 3.7C5.6 1.8 10 3.1 13.3 -0.1Z" fill="#43a436"/><path d="M3.6 11.6L6.4 11.2L5.6 13.1L3.4 12.9Z" fill="#43a436"/><path d="M8.3 5.7H13.8L16.3 10.75L13.8 15.8H8.3L5.7 10.75Z" fill="#313335"/><path d="M8.75 6.5H13.35L15.4 10.75L13.35 15H8.75L6.6 10.75Z" fill="#b3c4d5"/><path d="M9.2 9.3A2.4 2.4 0 1 0 12.7 9.3" fill="none" stroke="#20252a" stroke-width="1.25"/><path d="M10.95 7.6V11.3" fill="none" stroke="#20252a" stroke-width="1.7"/></svg>
<span class="tx" style="left:367.00px;top:2.11px;height:20px;line-height:20px;font-size:11.5px;letter-spacing:0.169px;color:#cccccc;font-family:'Liberation Sans',sans-serif;">application.yml</span>
<svg class="ic" style="left:452.3px;top:8.1px" width="9" height="9" viewBox="0 0 9 9"><path d="M1.1 1.2L7.9 7.8M7.9 1.2L1.1 7.8" stroke="#7d8183" stroke-width="1" fill="none"/></svg>
<div class="tab" style="left:469px;width:161px"></div>
<svg class="ic" style="left:477.75px;top:4.85px" width="14.3" height="14.3" viewBox="0 0 14.2 14.2"><circle cx="7.1" cy="7.1" r="7.1" fill="#2591b2"/><text x="7.1" y="10.15" text-anchor="middle" font-family="'Liberation Sans',sans-serif" font-size="8.6" fill="#1d4f60" stroke="#1d4f60" stroke-width="0.35">C</text></svg>
<span class="tx" style="left:496.50px;top:2.11px;height:20px;line-height:20px;font-size:11.5px;letter-spacing:0.004px;color:#cccccc;font-family:'Liberation Sans',sans-serif;">MessageSupport.java</span>
<svg class="ic" style="left:614.3px;top:8.1px" width="9" height="9" viewBox="0 0 9 9"><path d="M1.1 1.2L7.9 7.8M7.9 1.2L1.1 7.8" stroke="#7d8183" stroke-width="1" fill="none"/></svg>
<div class="tab" style="left:631px;width:195px"></div>
<svg class="ic" style="left:639.85px;top:4.85px" width="14.3" height="14.3" viewBox="0 0 14.2 14.2"><circle cx="7.1" cy="7.1" r="7.1" fill="#4f9547"/><text x="7.1" y="10" text-anchor="middle" font-family="'Liberation Mono',monospace" font-size="8.4" fill="#1f3d1c" stroke="#1f3d1c" stroke-width="0.3">I</text></svg>
<span class="tx" style="left:658.70px;top:2.11px;height:20px;line-height:20px;font-size:11.5px;letter-spacing:0.027px;color:#cccccc;font-family:'Liberation Sans',sans-serif;">PickingOrderRepository.java</span>
<svg class="ic" style="left:810.2px;top:8.1px" width="9" height="9" viewBox="0 0 9 9"><path d="M1.1 1.2L7.9 7.8M7.9 1.2L1.1 7.8" stroke="#7d8183" stroke-width="1" fill="none"/></svg>
<div class="tab" style="left:827px;width:195px"></div>
<svg class="ic" style="left:835.75px;top:4.85px" width="14.3" height="14.3" viewBox="0 0 14.2 14.2"><circle cx="7.1" cy="7.1" r="7.1" fill="#2591b2"/><text x="7.1" y="10.15" text-anchor="middle" font-family="'Liberation Sans',sans-serif" font-size="8.6" fill="#1d4f60" stroke="#1d4f60" stroke-width="0.35">C</text></svg>
<span class="tx" style="left:854.20px;top:2.11px;height:20px;line-height:20px;font-size:11.5px;letter-spacing:-0.054px;color:#cccccc;font-family:'Liberation Sans',sans-serif;">SocketChannelManager.java</span>
<svg class="ic" style="left:1006.1px;top:8.1px" width="9" height="9" viewBox="0 0 9 9"><path d="M1.1 1.2L7.9 7.8M7.9 1.2L1.1 7.8" stroke="#7d8183" stroke-width="1" fill="none"/></svg>
<div class="tab" style="left:1023px;width:158px"></div>
<svg class="ic" style="left:1031.85px;top:4.85px" width="14.3" height="14.3" viewBox="0 0 14.2 14.2"><circle cx="7.1" cy="7.1" r="7.1" fill="#2591b2"/><text x="7.1" y="10.15" text-anchor="middle" font-family="'Liberation Sans',sans-serif" font-size="8.6" fill="#1d4f60" stroke="#1d4f60" stroke-width="0.35">C</text></svg>
<span class="tx" style="left:1050.50px;top:2.11px;height:20px;line-height:20px;font-size:11.5px;letter-spacing:-0.144px;color:#cccccc;font-family:'Liberation Sans',sans-serif;">SocketResponse.java</span>
<svg class="ic" style="left:1165.2px;top:8.1px" width="9" height="9" viewBox="0 0 9 9"><path d="M1.1 1.2L7.9 7.8M7.9 1.2L1.1 7.8" stroke="#7d8183" stroke-width="1" fill="none"/></svg>
</div>

<div id="bc">
<span class="tx" style="left:62.30px;top:2.09px;height:20px;line-height:20px;font-size:13px;letter-spacing:-0.115px;color:#c4c4c4;font-family:'Liberation Sans',sans-serif;">PickingBeeController</span>
<svg class="ic" style="left:193px;top:9.3px" width="5" height="7" viewBox="0 0 5 7"><path d="M0.8 0.6L3.9 3.5L0.8 6.4" fill="none" stroke="#727577" stroke-width="1"/></svg>
<span class="tx" style="left:206.10px;top:2.09px;height:20px;line-height:20px;font-size:13px;letter-spacing:-0.046px;color:#c4c4c4;font-family:'Liberation Sans',sans-serif;">batchPickerPrderReceiving()</span>
</div>
<div id="bcline"></div>

<div id="bot">
<span class="tx" style="left:15.8px;top:4px;font-size:12px;line-height:14px;color:#b0b0b0">Terminal</span>
<span class="tx" style="left:102px;top:4px;font-size:12px;line-height:14px;color:#b0b0b0">Java Enterprise</span>
<span class="tx" style="left:221px;top:4px;font-size:12px;line-height:14px;color:#b0b0b0">9: Version Control</span>
<span class="tx" style="left:353px;top:4px;font-size:12px;line-height:14px;color:#b0b0b0">Log Activity</span>
<span class="tx" style="left:497px;top:4px;font-size:12px;line-height:14px;color:#b0b0b0">Alibaba Cloud View</span>
<span class="tx" style="left:1274px;top:4px;font-size:12px;line-height:14px;color:#b0b0b0">Event Log</span>
<span class="tx" style="left:1365px;top:4px;font-size:12px;line-height:14px;color:#b0b0b0">Flutter Performance</span>
<div style="position:absolute;left:0px;top:5px;width:11px;height:9px;background:#9aa0a6"></div>
<div style="position:absolute;left:84px;top:5px;width:11px;height:9px;background:#9aa0a6"></div>
<div style="position:absolute;left:206px;top:5px;width:8px;height:9px;border-left:2px solid #9aa0a6"></div>
<div style="position:absolute;left:338px;top:3px;width:11px;height:11px;border-radius:50%;background:#35a2d8"></div>
<div style="position:absolute;left:478px;top:5px;width:12px;height:9px;background:#2f7bd8"></div>
<div style="position:absolute;left:1257px;top:4px;width:12px;height:12px;border-radius:50%;background:#f0a020"></div>
<svg style="position:absolute;left:1351px;top:3px" width="9" height="11" viewBox="0 0 9 11"><path d="M6 0H9L2.4 6.6L0.9 5.1Z" fill="#40c4ff"/></svg>
</div>

<div id="note"></div>
<div id="notec">
<svg class="ic" style="left:1120.5px;top:818.5px" width="16" height="14" viewBox="0 0 16 14"><path d="M14.6 0.2C15.2 3.2 15.4 6.6 13.4 9.2C11.2 12 6.8 12.6 3.6 11.2C2.8 11.8 2 12.6 1.4 13.4C0.9 13 0.9 12.2 1.4 11.6C-0.6 8.8 0.2 5 3.4 3.4C6.6 1.8 11.6 2.8 14.6 0.2Z" fill="#45a838"/><path d="M2.2 11.4C5.4 10.4 8.8 8.2 11 5.4" fill="none" stroke="#4e5254" stroke-width="0.9" opacity=".65"/></svg>
<span class="tx" style="left:1142.00px;top:817.00px;height:20px;line-height:20px;font-size:13px;letter-spacing:0.192px;color:#c9c9c9;font-family:'DejaVu Sans Condensed','DejaVu Sans','Liberation Sans',sans-serif;font-weight:bold;-webkit-text-stroke:0;">Spring Configuration Check</span>
<span class="tx" style="left:1142.00px;top:836.30px;height:20px;line-height:20px;font-size:13px;letter-spacing:0.454px;color:#bbbbbb;font-family:'DejaVu Sans Condensed','DejaVu Sans','Liberation Sans',sans-serif;">Unmapped Spring configuration files found.</span>
<span class="tx" style="left:1141.80px;top:859.12px;height:20px;line-height:20px;font-size:13.5px;letter-spacing:0.090px;color:#4a9df6;font-family:'Liberation Sans',sans-serif;">Show Help</span>
<span class="tx" style="left:1224.10px;top:859.12px;height:20px;line-height:20px;font-size:13.5px;letter-spacing:-0.077px;color:#4a9df6;font-family:'Liberation Sans',sans-serif;">Disable...</span>
</div>
</body>
</html>
